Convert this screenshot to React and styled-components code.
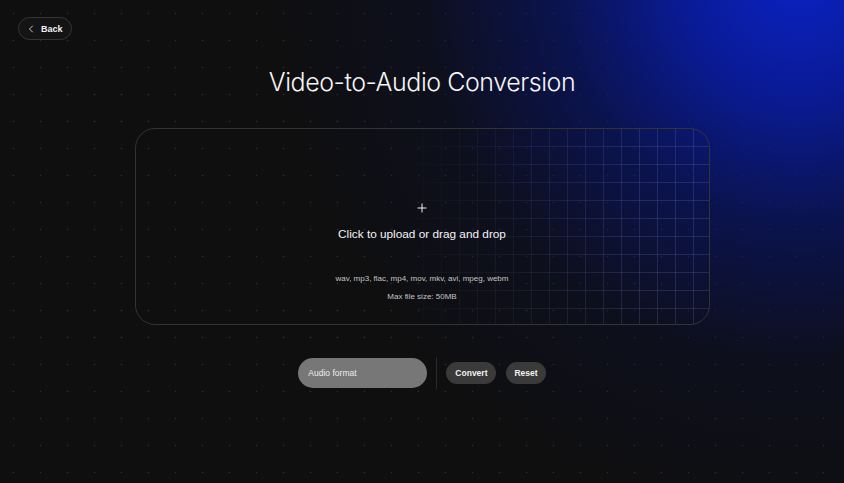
import React from 'react'
import styled, { createGlobalStyle } from 'styled-components'
import { ChevronLeft, Plus } from 'lucide-react'

const GlobalStyle = createGlobalStyle`
  html, body {
    margin: 0;
    padding: 0;
    background: #0f0f0f;
  }
  * {
    box-sizing: border-box;
  }
`

const Page = styled.div`
  position: relative;
  width: 100%;
  min-height: 483px;
  overflow: hidden;
  font-family: "Liberation Sans", Arial, sans-serif;
  color: #fff;
  background-color: #0f0f0f;
  background-image:
    radial-gradient(ellipse 540px 560px at 800px -30px, rgba(10, 34, 196, 1) 0%, rgba(9, 28, 165, 0.9) 22%, rgba(8, 22, 120, 0.6) 45%, rgba(8, 16, 70, 0.25) 70%, rgba(15, 15, 15, 0) 100%),
    radial-gradient(circle, #2c2c2c 0.7px, transparent 1.1px);
  background-size: 100% 100%, 27px 27px;
  background-position: 0 0, 0 0;
  display: flex;
  flex-direction: column;
  align-items: center;
`

const TopBar = styled.div`
  align-self: stretch;
  padding: 17px 18px 0;
  display: flex;
`

const BackButton = styled.button`
  display: flex;
  align-items: center;
  gap: 4px;
  height: 23px;
  padding: 0 8px 0 6px;
  border-radius: 12px;
  border: 1px solid #353535;
  background: #141414;
  color: #f2f2f2;
  font-family: "Liberation Sans", Arial, sans-serif;
  font-weight: 700;
  font-size: 9px;
  cursor: pointer;
`

const Title = styled.h1`
  margin: 25px 0 0;
  font-family: Inter, "Liberation Sans", sans-serif;
  font-weight: 300;
  font-size: 25px;
  line-height: 34px;
  letter-spacing: -0.45px;
  color: #f5f5f5;
`

const DropZone = styled.div`
  position: relative;
  margin-top: 29px;
  width: 575px;
  height: 197px;
  border: 1px solid #333;
  border-radius: 20px;
  overflow: hidden;
  display: flex;
  flex-direction: column;
  align-items: center;
  padding-top: 72px;
  cursor: pointer;

  &::before {
    content: "";
    position: absolute;
    inset: 0;
    background-image:
      linear-gradient(to right, rgba(130, 140, 210, 0.2) 1px, transparent 1px),
      linear-gradient(to bottom, rgba(130, 140, 210, 0.2) 1px, transparent 1px);
    background-size: 18px 18px;
    background-position: -1px -1px;
    -webkit-mask-image: linear-gradient(to right, transparent 45%, rgba(0, 0, 0, 0.45) 65%, #000 90%);
    mask-image: linear-gradient(to right, transparent 45%, rgba(0, 0, 0, 0.45) 65%, #000 90%);
    pointer-events: none;
  }
`

const DropContent = styled.div`
  position: relative;
  display: flex;
  flex-direction: column;
  align-items: center;
`

const UploadText = styled.div`
  margin-top: 12px;
  font-size: 11.8px;
  font-weight: 500;
  color: #f4f4f4;
`

const Hint = styled.div`
  margin-top: ${p => p.$gap}px;
  font-size: 8px;
  color: #c4c4c4;
`

const Controls = styled.div`
  margin-top: 32px;
  display: flex;
  align-items: center;
  gap: 9px;
`

const FormatSelect = styled.div`
  width: 129px;
  height: 30px;
  border-radius: 15px;
  background: #777;
  color: #eee;
  font-size: 8.5px;
  display: flex;
  align-items: center;
  padding: 0 10px;
`

const Divider = styled.div`
  width: 1px;
  height: 32px;
  background: #2a2a2a;
`

const PillButton = styled.button`
  height: 22px;
  padding: 0 ${p => p.$pad}px;
  border: none;
  border-radius: 11px;
  background: #3a3a3a;
  color: #f2f2f2;
  font-family: "Liberation Sans", Arial, sans-serif;
  font-weight: 700;
  font-size: 8.5px;
  cursor: pointer;
`

export default function App() {
  return (
    <>
      <GlobalStyle />
      <Page>
        <TopBar>
          <BackButton>
            <ChevronLeft size={12} strokeWidth={1.6} />
            Back
          </BackButton>
        </TopBar>
        <Title>Video-to-Audio Conversion</Title>
        <DropZone>
          <DropContent>
            <Plus size={14} strokeWidth={1.6} color="#fff" />
            <UploadText>Click to upload or drag and drop</UploadText>
            <Hint $gap={33}>wav, mp3, flac, mp4, mov, mkv, avi, mpeg, webm</Hint>
            <Hint $gap={9}>Max file size: 50MB</Hint>
          </DropContent>
        </DropZone>
        <Controls>
          <FormatSelect>Audio format</FormatSelect>
          <Divider />
          <PillButton $pad={9}>Convert</PillButton>
          <PillButton $pad={8} style={{ marginLeft: 1 }}>Reset</PillButton>
        </Controls>
      </Page>
    </>
  )
}
